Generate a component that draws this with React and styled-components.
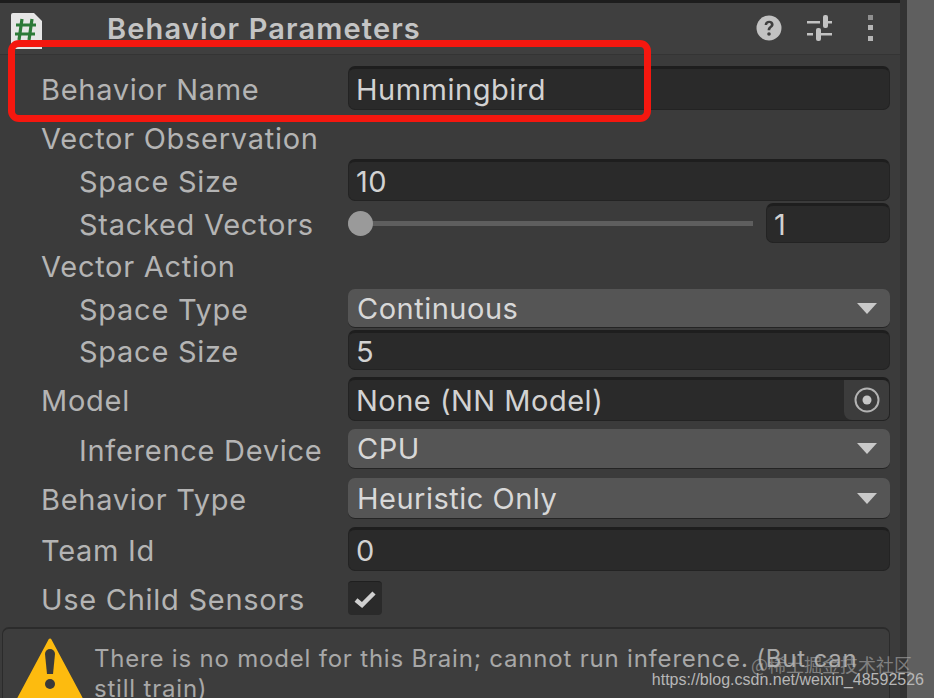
import React from 'react';
import styled, { createGlobalStyle } from 'styled-components';

const GlobalStyle = createGlobalStyle`
  html, body {
    margin: 0;
    padding: 0;
    height: 698px;
    overflow: hidden;
    background: #3c3c3c;
  }
`;

const Window = styled.div`
  position: relative;
  display: flex;
  width: 934px;
  height: 698px;
  overflow: hidden;
  background: #3c3c3c;
  font-family: Inter, "Noto Sans", sans-serif;
  color: #b9b9b9;
`;

const Inspector = styled.div`
  display: flex;
  flex-direction: column;
  width: 900px;
  flex-shrink: 0;
  border-top: 3px solid #1d1d1d;
  background: #3b3b3b;
`;

const Gutter = styled.div`
  width: 7px;
  flex-shrink: 0;
  background: #333333;
`;

const Scrollbar = styled.div`
  flex: 1;
  background: #5f5f5f;
`;

const Header = styled.header`
  display: flex;
  align-items: center;
  height: 51px;
  flex-shrink: 0;
  padding: 0 27px 0 11px;
  border-bottom: 1px solid #343434;
  background: #3f3f3f;
`;

const ScriptIcon = styled.svg`
  width: 31px;
  height: 36px;
  flex-shrink: 0;
  margin-top: 4px;
`;

const Title = styled.h1`
  margin: 0 0 0 65px;
  font-size: 29px;
  font-weight: 600;
  letter-spacing: 1.15px;
  color: #c4c4c4;
`;

const HeaderTools = styled.div`
  display: flex;
  align-items: center;
  gap: 25px;
  margin: 0 0 2px auto;
`;

const MoreSlot = styled.span`
  display: flex;
  margin-left: 10px;
`;

const Form = styled.div`
  display: flex;
  flex-direction: column;
  padding: 11px 10px 0 41px;
`;

const Row = styled.div`
  display: flex;
  align-items: center;
  height: ${(props) => props.$height}px;
  margin-top: ${(props) => props.$top || 0}px;
`;

const Label = styled.span`
  width: 307px;
  flex-shrink: 0;
  padding: 2px 0 0 ${(props) => (props.$nested ? 38 : 0)}px;
  box-sizing: border-box;
  font-size: 29px;
  font-weight: 400;
  letter-spacing: 0.72px;
  white-space: nowrap;
  color: #b4b4b4;
`;

const Field = styled.div`
  display: flex;
  align-items: center;
  flex: 1;
  align-self: stretch;
  min-width: 0;
  box-sizing: border-box;
  padding-left: 7px;
  border-radius: 7px;
  border: 1px solid #232323;
  border-top: 3px solid #1e1e1e;
  background: #2a2a2a;
  font-size: 29px;
  letter-spacing: 0.5px;
  color: #d2d2d2;
`;

const Select = styled(Field)`
  position: relative;
  justify-content: space-between;
  padding: 0 13px 0 9px;
  border: none;
  border-bottom: 1px solid #242424;
  background: #555555;
  color: #d8d8d8;
`;

const Caret = styled.span`
  width: 0;
  height: 0;
  border-left: 10px solid transparent;
  border-right: 10px solid transparent;
  border-top: 11px solid #c9c9c9;
`;

const ObjectPicker = styled.span`
  display: flex;
  align-items: center;
  justify-content: center;
  width: 45px;
  align-self: stretch;
  margin-left: auto;
  border-radius: 0 6px 6px 8px;
  background: #3c3c3c;
`;

const SliderArea = styled.div`
  display: flex;
  align-items: center;
  flex: 1;
  align-self: stretch;
`;

const Track = styled.div`
  position: relative;
  display: flex;
  align-items: center;
  width: 405px;
  height: 5px;
  background: #5e5e5e;
`;

const Thumb = styled.span`
  position: absolute;
  left: 0;
  width: 25px;
  height: 25px;
  border-radius: 50%;
  background: #9a9a9a;
`;

const SliderValue = styled(Field)`
  flex: none;
  width: 124px;
  margin-left: 13px;
`;

const Checkbox = styled.div`
  display: flex;
  align-items: center;
  justify-content: center;
  width: 34px;
  height: 34px;
  border-radius: 4px;
  border-top: 1px solid #1f1f1f;
  box-sizing: border-box;
  background: #2a2a2a;
`;

const HelpBox = styled.div`
  display: flex;
  gap: 11px;
  box-sizing: border-box;
  width: 888px;
  height: 90px;
  margin: 12px 0 0 2px;
  padding: 9px 0 0 14px;
  border: 1px solid #2b2b2b;
  border-top-width: 2px;
  border-radius: 7px;
  background: #3d3d3d;
`;

const WarningIcon = styled.svg`
  width: 66px;
  height: 60px;
  flex-shrink: 0;
`;

const HelpText = styled.p`
  margin: 6px 0 0;
  width: 790px;
  font-size: 24px;
  line-height: 30px;
  letter-spacing: 0.8px;
  color: #a8a8a8;
`;

const Annotation = styled.div`
  position: absolute;
  left: 8px;
  top: 40px;
  width: 643px;
  height: 82px;
  box-sizing: border-box;
  border: 7px solid #f5170f;
  border-radius: 11px;
`;

const Watermark = styled.div`
  position: absolute;
  right: 10px;
  top: 654px;
  display: flex;
  flex-direction: column;
  align-items: flex-end;
  font-family: "Liberation Sans", Arial, sans-serif;
  color: #b7b7b7;
`;

const WatermarkBrand = styled.span`
  margin-right: 12px;
  font-family: "Noto Sans CJK SC", "Liberation Sans", sans-serif;
  font-size: 18px;
  line-height: 20px;
  opacity: 0.55;
`;

const WatermarkUrl = styled.span`
  font-size: 16px;
  line-height: 17px;
  margin-top: -3px;
`;

const HelpIcon = () => (
  <svg width="26" height="26" viewBox="0 0 26 26">
    <circle cx="13" cy="13" r="12.5" fill="#c2c2c2" />
    <path d="M8.6 10c.2-2.8 2.2-4.2 4.6-4.2 2.6 0 4.4 1.500 4.400 3.700 0 3-3.400 3.100-3.400 5.800h-2.600c0-3.700 3.300-3.900 3.300-5.700 0-.9-.7-1.500-1.700-1.500-1.100 0-1.900.7-2 1.900z" fill="#3f3f3f" />
    <circle cx="13" cy="19" r="1.800" fill="#3f3f3f" />
  </svg>
);

const PresetIcon = () => (
  <svg width="26" height="26" viewBox="0 0 26 26" fill="#c2c2c2">
    <rect x="0" y="6" width="13" height="2.500" />
    <rect x="16" y="0" width="5" height="13" rx="2" />
    <rect x="21" y="6" width="4" height="2.500" />
    <rect x="0" y="18" width="6" height="2.500" />
    <rect x="9" y="13" width="5" height="13" rx="2" />
    <rect x="14" y="18" width="11" height="2.500" />
  </svg>
);

const MoreIcon = () => (
  <svg width="5" height="26" viewBox="0 0 5 26" fill="#b5b5b5">
    <rect width="5" height="5" fill="#8f8f8f" />
    <rect y="10" width="5" height="5" />
    <rect y="21" width="5" height="5" />
  </svg>
);

const CheckIcon = () => (
  <svg width="24" height="20" viewBox="0 0 24 20">
    <path d="M3 11l6 5L21 4" fill="none" stroke="#d0d0d0" strokeWidth="4.500" />
  </svg>
);

const TargetIcon = () => (
  <svg width="26" height="26" viewBox="0 0 26 26">
    <circle cx="13" cy="13" r="11.500" fill="none" stroke="#b3b3b3" strokeWidth="2" />
    <circle cx="13" cy="13" r="4.500" fill="#c6c6c6" />
  </svg>
);

export default function App() {
  return (
    <Window>
      <GlobalStyle />
      <Inspector>
        <Header>
          <ScriptIcon viewBox="0 0 31 36">
            <path d="M0 2a2 2 0 0 1 2-2h21l8 8v28H0z" fill="#e6e6e6" />
            <path d="M11 6L8 27M21 6l-3 21M5 12h20M4 21h20" stroke="#2c7a38" strokeWidth="3.200" fill="none" />
          </ScriptIcon>
          <Title>Behavior Parameters</Title>
          <HeaderTools>
            <HelpIcon />
            <PresetIcon />
            <MoreSlot>
              <MoreIcon />
            </MoreSlot>
          </HeaderTools>
        </Header>
        <Form>
          <Row $height={44}>
            <Label>Behavior Name</Label>
            <Field>Hummingbird</Field>
          </Row>
          <Row $height={43} $top={6}>
            <Label>Vector Observation</Label>
          </Row>
          <Row $height={42}>
            <Label $nested>Space Size</Label>
            <Field>10</Field>
          </Row>
          <Row $height={40} $top={2}>
            <Label $nested>Stacked Vectors</Label>
            <SliderArea>
              <Track>
                <Thumb />
              </Track>
              <SliderValue>1</SliderValue>
            </SliderArea>
          </Row>
          <Row $height={43} $top={1}>
            <Label>Vector Action</Label>
          </Row>
          <Row $height={39} $top={2}>
            <Label $nested>Space Type</Label>
            <Select>
              Continuous
              <Caret />
            </Select>
          </Row>
          <Row $height={40} $top={2}>
            <Label $nested>Space Size</Label>
            <Field>5</Field>
          </Row>
          <Row $height={44} $top={7}>
            <Label>Model</Label>
            <Field>
              None (NN Model)
              <ObjectPicker>
                <TargetIcon />
              </ObjectPicker>
            </Field>
          </Row>
          <Row $height={40} $top={8}>
            <Label $nested>Inference Device</Label>
            <Select>
              CPU
              <Caret />
            </Select>
          </Row>
          <Row $height={41} $top={9}>
            <Label>Behavior Type</Label>
            <Select>
              Heuristic Only
              <Caret />
            </Select>
          </Row>
          <Row $height={44} $top={8}>
            <Label>Team Id</Label>
            <Field>0</Field>
          </Row>
          <Row $height={34} $top={10}>
            <Label>Use Child Sensors</Label>
            <Checkbox>
              <CheckIcon />
            </Checkbox>
          </Row>
        </Form>
        <HelpBox>
          <WarningIcon viewBox="0 0 66 60">
            <path d="M33 2L2 60h62z" fill="#fdbb0f" stroke="#fdbb0f" strokeWidth="3" strokeLinejoin="round" />
            <path d="M28 16a5 5 0 0 1 10 0l-2 20h-6z" fill="#3a3a3a" />
            <circle cx="33" cy="46" r="5" fill="#3a3a3a" />
          </WarningIcon>
          <HelpText>There is no model for this Brain; cannot run inference. (But can still train)</HelpText>
        </HelpBox>
      </Inspector>
      <Gutter />
      <Scrollbar />
      <Annotation />
      <Watermark>
        <WatermarkBrand>@稀土掘金技术社区</WatermarkBrand>
        <WatermarkUrl>https://blog.csdn.net/weixin_48592526</WatermarkUrl>
      </Watermark>
    </Window>
  );
}
